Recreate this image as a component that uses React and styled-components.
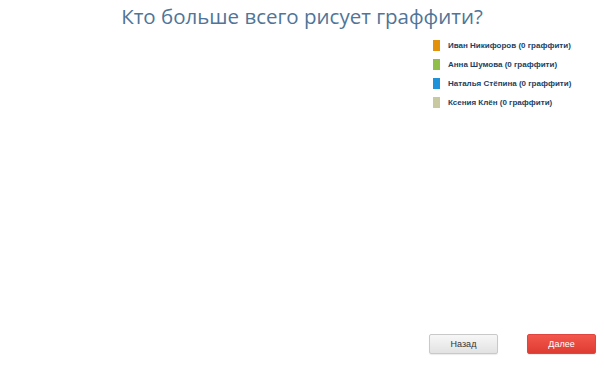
import React from "react";
import styled, { createGlobalStyle } from "styled-components";

const GlobalStyle = createGlobalStyle`
  html, body {
    margin: 0;
    padding: 0;
    background: #fff;
  }
`;

const Page = styled.div`
  display: flex;
  flex-direction: column;
  width: 604px;
  height: 392px;
  background: #fff;
  font-family: "Open Sans", "DejaVu Sans", sans-serif;
`;

const Title = styled.h1`
  margin: 0;
  padding-top: 2px;
  text-align: center;
  font-size: 20.5px;
  font-weight: 400;
  line-height: 28px;
  color: #4f7598;
`;

const Body = styled.div`
  flex: 1;
  display: flex;
  padding-top: 10px;
`;

const Chart = styled.div`
  flex: 1;
`;

const Legend = styled.ul`
  list-style: none;
  margin: 0;
  padding: 0;
  width: 171px;
  display: flex;
  flex-direction: column;
  gap: 8px;
`;

const LegendItem = styled.li`
  display: flex;
  align-items: center;
  gap: 8px;
  height: 11px;
  font-family: "Liberation Sans", Arial, sans-serif;
  font-weight: bold;
  font-size: 8px;
  color: #223f63;
`;

const Swatch = styled.span`
  width: 7px;
  height: 11px;
  background: ${(p) => p.color};
`;

const Footer = styled.div`
  display: flex;
  justify-content: flex-end;
  gap: 29px;
  padding: 0 8px 38px 0;
`;

const Button = styled.button`
  width: 69px;
  height: 20px;
  padding: 0;
  border-radius: 2px;
  font-family: "Liberation Sans", Arial, sans-serif;
  font-size: 9px;
  cursor: pointer;
  border: 1px solid ${(p) => (p.primary ? "#e0463d" : "#c9c9c9")};
  color: ${(p) => (p.primary ? "#fff" : "#333")};
  background: ${(p) =>
    p.primary
      ? "linear-gradient(#f3574c, #de3c33)"
      : "linear-gradient(#f7f7f7, #e2e2e2)"};
  box-shadow: 0 1px 1px rgba(0, 0, 0, 0.08);
`;

const people = [
  { name: "Иван Никифоров", color: "#e3900b" },
  { name: "Анна Шумова", color: "#8fbf48" },
  { name: "Наталья Стёпина", color: "#1f93d9" },
  { name: "Ксения Клён", color: "#c8c9a0" },
];

const App = () => {
  return (
    <>
      <GlobalStyle />
      <Page>
        <Title>Кто больше всего рисует граффити?</Title>
        <Body>
          <Chart />
          <Legend>
            {people.map((p) => (
              <LegendItem key={p.name}>
                <Swatch color={p.color} />
                <span>{p.name} (0 граффити)</span>
              </LegendItem>
            ))}
          </Legend>
        </Body>
        <Footer>
          <Button>Назад</Button>
          <Button primary>Далее</Button>
        </Footer>
      </Page>
    </>
  );
};

export default App;
